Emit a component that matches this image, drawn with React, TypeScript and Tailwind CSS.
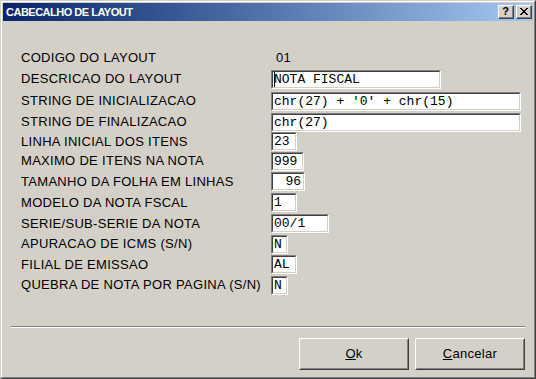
import React from "react";

type Row = {
  label: string;
  h: string;
  value?: string;
  plain?: boolean;
  w?: string;
  right?: boolean;
  caret?: boolean;
};

const rows: Row[] = [
  { label: "CODIGO DO LAYOUT", h: "h-[20px]", value: "01", plain: true },
  { label: "DESCRICAO DO LAYOUT", h: "h-[22px]", value: "NOTA FISCAL", w: "w-[170px]", caret: true },
  { label: "STRING DE INICIALIZACAO", h: "h-[22px]", value: "chr(27) + '0' + chr(15)", w: "w-[250px]" },
  { label: "STRING DE FINALIZACAO", h: "h-[20px]", value: "chr(27)", w: "w-[250px]" },
  { label: "LINHA INICIAL DOS ITENS", h: "h-[19px]", value: "23", w: "w-[26px]" },
  { label: "MAXIMO DE ITENS NA NOTA", h: "h-[20px]", value: "999", w: "w-[33px]" },
  { label: "TAMANHO DA FOLHA EM LINHAS", h: "h-[21px]", value: "96", w: "w-[34px]", right: true },
  { label: "MODELO DA NOTA FSCAL", h: "h-[21px]", value: "1", w: "w-[26px]" },
  { label: "SERIE/SUB-SERIE DA NOTA", h: "h-[21px]", value: "00/1", w: "w-[58px]" },
  { label: "APURACAO DE ICMS (S/N)", h: "h-[20px]", value: "N", w: "w-[17px]" },
  { label: "FILIAL DE EMISSAO", h: "h-[21px]", value: "AL", w: "w-[26px]" },
  { label: "QUEBRA DE NOTA POR PAGINA (S/N)", h: "h-[20px]", value: "N", w: "w-[17px]" },
];

const Field: React.FC<{ row: Row }> = ({ row }) => (
  <div
    className={`${row.w} h-[19px] border border-t-[#808080] border-l-[#808080] border-b-white border-r-white`}
  >
    <div
      className={`h-full flex items-center bg-white border border-t-[#404040] border-l-[#404040] border-b-[#d4d0c8] border-r-[#d4d0c8] px-[1px] font-['Liberation_Mono',monospace] text-[13px] leading-none text-black whitespace-pre overflow-hidden ${
        row.right ? "justify-end pr-[2px]" : ""
      }`}
    >
      {row.caret && <span className="inline-block w-px h-[15px] bg-black -mr-px" />}
      {row.value}
    </div>
  </div>
);

const Button: React.FC<{ children: React.ReactNode }> = ({ children }) => (
  <div className="w-[110px] h-[32px] border border-t-white border-l-white border-b-[#404040] border-r-[#404040]">
    <div className="h-full flex items-center justify-center border border-t-[#d4d0c8] border-l-[#d4d0c8] border-b-[#808080] border-r-[#808080] text-[13px] tracking-[0.3px] text-black">
      {children}
    </div>
  </div>
);

const CaptionButton: React.FC<{ children: React.ReactNode }> = ({ children }) => (
  <div className="w-[16px] h-[14px] bg-[#d4d0c8] border border-t-white border-l-white border-b-[#404040] border-r-[#404040]">
    <div className="h-full flex items-center justify-center border-b border-r border-b-[#808080] border-r-[#808080]">
      {children}
    </div>
  </div>
);

export default function App() {
  return (
    <div className="w-[536px] h-[379px] border border-t-[#d4d0c8] border-l-[#d4d0c8] border-b-[#404040] border-r-[#404040] font-['Liberation_Sans',Arial,sans-serif]">
      <div className="h-full border border-t-white border-l-white border-b-[#808080] border-r-[#808080] bg-[#d4d0c8] p-px flex flex-col">
        {/* title bar */}
        <div className="h-[18px] flex items-center bg-gradient-to-r from-[#0a246a] to-[#a6caf0] pl-[3px] pr-[1px]">
          <span className="text-white font-bold text-[11px] tracking-[-0.5px] leading-none">
            CABECALHO DE LAYOUT
          </span>
          <div className="ml-auto flex gap-[2px]">
            <CaptionButton>
              <span className="text-[11px] font-bold leading-none text-black -mt-px">?</span>
            </CaptionButton>
            <CaptionButton>
              <svg width="8" height="7" viewBox="0 0 8 7" shapeRendering="crispEdges">
                <path d="M0 0h2v1h-2zM6 0h2v1h-2zM1 1h2v1h-2zM5 1h2v1h-2zM2 2h4v1h-4zM3 3h2v1h-2zM2 4h4v1h-4zM1 5h2v1h-2zM5 5h2v1h-2zM0 6h2v1h-2zM6 6h2v1h-2z" fill="#000" />
              </svg>
            </CaptionButton>
          </div>
        </div>

        {/* body */}
        <div className="flex-1 flex flex-col px-[8px]">
          <div className="mt-[27px] ml-[10px] flex flex-col">
            {rows.map((row) => (
              <div key={row.label} className={`${row.h} flex items-center`}>
                <span className="w-[250px] text-[13px] tracking-[0.3px] text-black leading-none -mt-px">
                  {row.label}
                </span>
                {row.plain ? (
                  <span className="ml-[5px] text-[13px] tracking-[0.3px] text-black leading-none -mt-px">
                    {row.value}
                  </span>
                ) : (
                  <Field row={row} />
                )}
              </div>
            ))}
          </div>

          <div className="mt-[31px] border-t border-t-[#808080] border-b border-b-white" />

          <div className="mt-[10px] flex justify-end gap-[6px]">
            <Button>
              <span className="underline">O</span>k
            </Button>
            <Button>
              <span className="underline">C</span>ancelar
            </Button>
          </div>
        </div>
      </div>
    </div>
  );
}
